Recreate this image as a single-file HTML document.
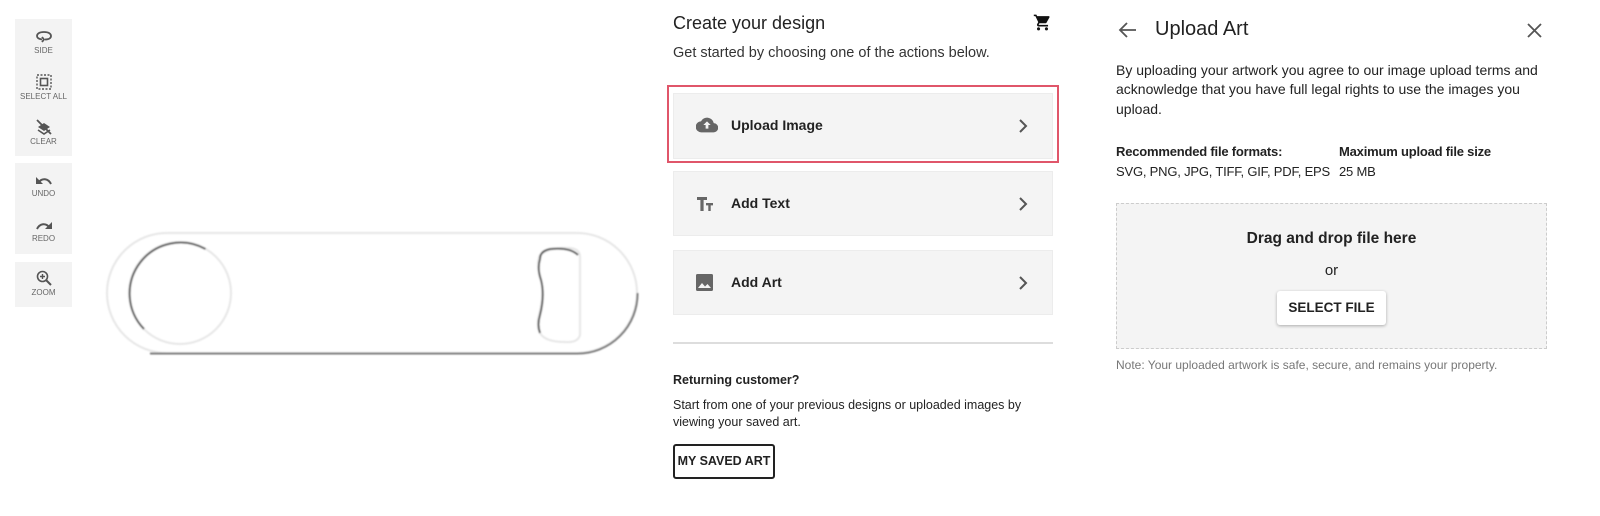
<!DOCTYPE html>
<html><head><meta charset="utf-8"><style>
*{margin:0;padding:0;box-sizing:border-box}
body{width:1600px;height:516px;background:#fff;font-family:"Liberation Sans",Arial,sans-serif;color:#222;position:relative;overflow:hidden}
.abs{position:absolute}
.grp{position:absolute;left:15px;width:57px;background:#f3f3f3}
.tool{position:absolute;left:0;width:57px;text-align:center;font-size:8px;color:#666}
.tool svg{display:block;margin:0 auto 2px}
.card{position:absolute;left:673px;width:380px;background:#f4f4f4;border:1px solid #ececec}
.card .lbl{position:absolute;left:57px;font-size:14px;font-weight:bold;color:#222}
.card .ic{position:absolute;left:22px}
.card .chev{position:absolute;right:24px}
</style></head><body>

<div class="grp" style="top:19px;height:137px">
 <div class="tool" style="top:11px"><svg width="18" height="14" viewBox="0 0 18 14"><path d="M9 2C4 2 2 4 2 6s2 3 5 3.5M9 2c5 0 7 2 7 4s-2 3.5-6 3.5" fill="none" stroke="#555" stroke-width="1.8"/><path d="M7 7l2 2.5-2 2.5" fill="none" stroke="#555" stroke-width="1.8"/></svg>SIDE</div>
 <div class="tool" style="top:55px"><svg width="16" height="16" viewBox="0 0 16 16"><rect x="1" y="1" width="14" height="14" fill="none" stroke="#555" stroke-width="1.4" stroke-dasharray="2 1.5"/><rect x="4.5" y="4.5" width="7" height="7" fill="none" stroke="#555" stroke-width="1.6"/></svg>SELECT ALL</div>
 <div class="tool" style="top:100px"><svg width="18" height="16" viewBox="0 0 18 16"><path d="M3 8l6-4 6 4-6 4z" fill="#555"/><path d="M3 11l6 4 6-4" fill="none" stroke="#555" stroke-width="1.6"/><path d="M2 1l14 14" stroke="#555" stroke-width="1.8"/></svg>CLEAR</div>
</div>
<div class="grp" style="top:163px;height:91px">
 <div class="tool" style="top:12px"><svg width="18" height="12" viewBox="0 0 18 12"><path d="M4 7c3-4 9-4 12 2" fill="none" stroke="#555" stroke-width="2"/><path d="M1 2v7h7z" fill="#555"/></svg>UNDO</div>
 <div class="tool" style="top:57px"><svg width="18" height="12" viewBox="0 0 18 12"><path d="M14 7c-3-4-9-4-12 2" fill="none" stroke="#555" stroke-width="2"/><path d="M17 2v7h-7z" fill="#555"/></svg>REDO</div>
</div>
<div class="grp" style="top:262px;height:45px">
 <div class="tool" style="top:8px"><svg width="16" height="16" viewBox="0 0 16 16"><circle cx="6.5" cy="6.5" r="5" fill="none" stroke="#555" stroke-width="1.6"/><path d="M10 10l5 5" stroke="#555" stroke-width="2"/><path d="M6.5 4v5M4 6.5h5" stroke="#555" stroke-width="1.4"/></svg>ZOOM</div>
</div>

<svg class="abs" style="left:100px;top:225px" width="545" height="135" viewBox="0 0 545 135">
 <defs><filter id="b"><feGaussianBlur stdDeviation="0.7"/></filter></defs>
 <g filter="url(#b)">
 <rect x="7" y="8" width="530" height="120" rx="60" fill="#fff" stroke="#e6e6e6" stroke-width="2"/>
 <path d="M50 128.5 H477 A60 60 0 0 0 537.5 68" fill="none" stroke="#777" stroke-width="2"/>
 <circle cx="80" cy="68" r="51" fill="#fff" stroke="#e6e6e6" stroke-width="2"/>
 <path d="M44 104 A51 51 0 0 1 105.5 24" fill="none" stroke="#555" stroke-width="2"/>
 <path d="M440 30 Q450 22 470 23 Q480 24 480 32 V110 Q478 118 465 117 Q445 117 440 108 Q436 100 439 90 Q445 68 440 50 Q436 38 440 30z" fill="#fff" stroke="#e6e6e6" stroke-width="2"/>
 <path d="M478 30 Q470 22 450 24 Q440 26 440 34 Q437 44 441 55 Q445 70 440 90 Q437 100 440 108" fill="none" stroke="#555" stroke-width="2"/>
 </g>
</svg>

<div class="abs" style="left:673px;top:13px;font-size:18px;color:#222">Create your design</div>
<svg class="abs" style="left:1033px;top:13px" width="19" height="19" viewBox="0 0 24 24"><path d="M7 18c-1.1 0-2 .9-2 2s.9 2 2 2 2-.9 2-2-.9-2-2-2zM1 2v2h2l3.6 7.6-1.4 2.4c-.1.3-.2.6-.2 1 0 1.1.9 2 2 2h12v-2H7.4c-.1 0-.2-.1-.2-.2v-.1l.9-1.700h7.4c.8 0 1.4-.4 1.7-1l3.6-6.5c.1-.2.1-.3.1-.5 0-.6-.4-1-1-1H5.2l-.9-2H1zm16 16c-1.1 0-2 .9-2 2s.9 2 2 2 2-.9 2-2-.9-2-2-2z" fill="#111"/></svg>
<div class="abs" style="left:673px;top:45px;font-size:14.5px;color:#333">Get started by choosing one of the actions below.</div>

<div class="abs" style="left:667px;top:85px;width:392px;height:78px;border:2px solid #e0566a"></div>
<div class="card" style="top:93px;height:66px">
 <svg class="ic" style="top:22px" width="22" height="18" viewBox="0 0 24 18"><path d="M19.4 7A7.5 7.5 0 0 0 5.4 5 6 6 0 0 0 6 17h13a5 5 0 0 0 .4-10z" fill="#666"/><path d="M12 5l-4 4h2.5v4h3V9H16z" fill="#f4f4f4"/></svg>
 <div class="lbl" style="top:23px">Upload Image</div>
 <svg class="chev" style="top:24px" width="10" height="16" viewBox="0 0 10 16"><path d="M2 2l6 6-6 6" fill="none" stroke="#555" stroke-width="2"/></svg>
</div>
<div class="card" style="top:171px;height:65px">
 <svg class="ic" style="top:24px" width="18" height="16" viewBox="0 0 18 16"><path d="M1 1h10v3H7.6v11H4.4V4H1z M10 7h7v2.4h-2.3V15h-2.4V9.4H10z" fill="#666"/></svg>
 <div class="lbl" style="top:23px">Add Text</div>
 <svg class="chev" style="top:24px" width="10" height="16" viewBox="0 0 10 16"><path d="M2 2l6 6-6 6" fill="none" stroke="#555" stroke-width="2"/></svg>
</div>
<div class="card" style="top:250px;height:65px">
 <svg class="ic" style="top:23px" width="17" height="17" viewBox="0 0 17 17"><rect x="0" y="0" width="17" height="17" rx="1.5" fill="#666"/><path d="M2 14l4-5 3 3.5 2.5-2.5L15 14z" fill="#f4f4f4"/></svg>
 <div class="lbl" style="top:23px">Add Art</div>
 <svg class="chev" style="top:24px" width="10" height="16" viewBox="0 0 10 16"><path d="M2 2l6 6-6 6" fill="none" stroke="#555" stroke-width="2"/></svg>
</div>
<div class="abs" style="left:673px;top:342px;width:380px;height:2px;background:#ddd"></div>
<div class="abs" style="left:673px;top:373px;font-size:12.5px;font-weight:bold">Returning customer?</div>
<div class="abs" style="left:673px;top:397px;font-size:12.5px;line-height:17px;color:#222">Start from one of your previous designs or uploaded images by<br>viewing your saved art.</div>
<div class="abs" style="left:673px;top:444px;width:102px;height:35px;border:2px solid #222;border-radius:3px;font-size:12.5px;font-weight:bold;text-align:center;line-height:31px">MY SAVED ART</div>

<svg class="abs" style="left:1118px;top:21px" width="19" height="18" viewBox="0 0 19 18"><path d="M18 9H3M9 2L2 9l7 7" fill="none" stroke="#555" stroke-width="1.8"/></svg>
<div class="abs" style="left:1155px;top:18px;font-size:20px;color:#222">Upload Art</div>
<svg class="abs" style="left:1527px;top:23px" width="15" height="15" viewBox="0 0 15 15"><path d="M1 1l13 13M14 1L1 14" stroke="#555" stroke-width="1.8"/></svg>
<div class="abs" style="left:1116px;top:61px;font-size:14px;line-height:19.3px;color:#222;width:440px">By uploading your artwork you agree to our image upload terms and acknowledge that you have full legal rights to use the images you upload.</div>
<div class="abs" style="left:1116px;top:142px;font-size:13px;line-height:19.5px;letter-spacing:-0.2px"><b>Recommended file formats:</b><br>SVG, PNG, JPG, TIFF, GIF, PDF, EPS</div>
<div class="abs" style="left:1339px;top:142px;font-size:13px;line-height:19.5px;letter-spacing:-0.2px"><b>Maximum upload file size</b><br>25 MB</div>
<div class="abs" style="left:1116px;top:203px;width:431px;height:146px;background:#f4f4f4;border:1.5px dashed #ccc"></div>
<div class="abs" style="left:1116px;top:230px;width:431px;text-align:center;font-size:15.5px;font-weight:bold;color:#222">Drag and drop file here</div>
<div class="abs" style="left:1116px;top:262px;width:431px;text-align:center;font-size:15px">or</div>
<div class="abs" style="left:1277px;top:291px;width:109px;height:34px;background:#fff;border-radius:3px;box-shadow:0 1px 3px rgba(0,0,0,.3);text-align:center;line-height:34px;font-size:13.5px;font-weight:bold;color:#222">SELECT FILE</div>
<div class="abs" style="left:1116px;top:358px;font-size:12px;color:#777">Note: Your uploaded artwork is safe, secure, and remains your property.</div>
</body></html>
